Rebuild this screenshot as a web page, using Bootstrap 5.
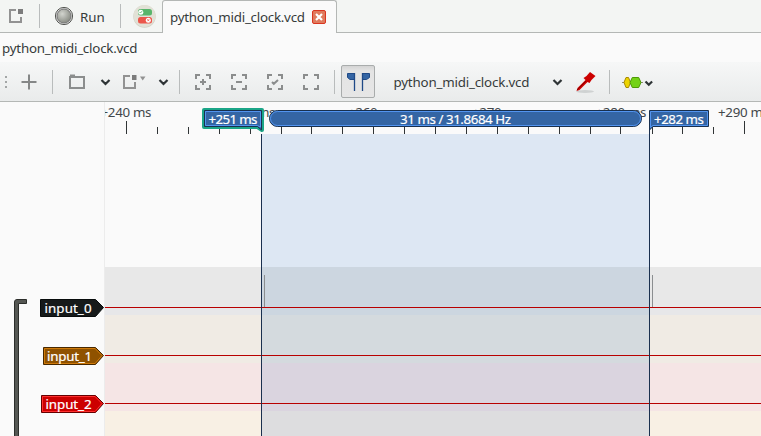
<!DOCTYPE html>
<html lang="en">
<head>
<meta charset="utf-8">
<meta name="viewport" content="width=device-width, initial-scale=1">
<title>python_midi_clock.vcd</title>
<link href="https://cdn.jsdelivr.net/npm/bootstrap@5.3.0/dist/css/bootstrap.min.css" rel="stylesheet">
<style>
body{font:13.33px/18px "Noto Sans",sans-serif;color:#363b3b;background:#fafafa;height:436px}
svg{display:block;flex:none}
.tabstrip{height:33px;background:#f3f5f3}
.strip-part{border-bottom:1px solid #b4b7b5}
.strip-tools{width:162px}
.run-label{padding-top:2px}
.file-tab{width:175px;border:1px solid #b4b7b5;border-bottom:0;border-radius:3px 3px 0 0;background:#fafafa;padding:0 0 1px 7px}
.doc-title{height:29px;padding:7px 0 0 2px}
.tools{height:40px;background:linear-gradient(#f6f7f7,#e9ebeb);border-bottom:1px solid #b4b7b5}
.divider{width:1px;height:24px;background:#b9bcbc;flex:none}
.cursor-btn{flex:none;margin-left:6px;width:34px;height:33px;border:1px solid #a9acac;border-radius:2px;background:linear-gradient(#d4d4d4,#e4e4e4 5px,#e6e6e6)}
.panel{width:104px;flex:none;border-right:1px solid #ececec;box-sizing:content-box}
text{font-family:"Noto Sans",sans-serif;font-size:13.33px;fill:#42474a}
text.name{fill:#363b3b}
.tag text{fill:#fff;stroke:#fff;stroke-width:.2px}
</style>
<script src="https://cdn.jsdelivr.net/npm/bootstrap@5.3.0/dist/js/bootstrap.bundle.min.js"></script>
</head>
<body class="d-flex flex-column overflow-hidden m-0">
<nav class="tabstrip d-flex">
  <div class="strip-part strip-tools d-flex align-items-center">
    <svg width="39" height="32" fill="none"><path d="M16 10H10V22H21V17" stroke="#929292" stroke-width="2"/><rect x="18" y="9" width="5" height="5" fill="#7c7c7c"/></svg>
    <span class="divider"></span>
    <svg width="40" height="32"><defs><radialGradient id="ball" cx=".38" cy=".35" r=".7"><stop stop-color="#d2d4ce"/><stop offset="1" stop-color="#858880"/></radialGradient></defs><circle cx="24" cy="16" r="8.6" fill="#dedede" stroke="#555753"/><circle cx="24" cy="16" r="7" fill="url(#ball)" stroke="#777"/></svg>
    <span class="run-label">Run</span>
    <span class="divider ms-auto"></span>
    <svg width="41" height="32"><circle cx="23.500" cy="16.500" r="11.200" fill="#d1d0c4"/><circle cx="23.500" cy="16" r="11" fill="#e2e1d6"/><rect x="17" y="9" width="14" height="6.400" rx="2.500" fill="#59b56b"/><circle cx="19.800" cy="12.200" r="2.500" fill="#fff"/><path d="M18.500 12l1 1 1.700-2" fill="none" stroke="#59b56b" stroke-width=".8"/><rect x="17" y="17" width="14" height="6.400" rx="2.500" fill="#ec564b"/><circle cx="27.300" cy="20.200" r="2.500" fill="#fff"/><path d="M26.300 19.200l2 2m0-2l-2 2" stroke="#ec564b" stroke-width=".8"/></svg>
  </div>
  <div class="file-tab d-flex align-items-center">
    <svg width="142" height="30"><text class="name" x="0" y="20" textLength="135">python_midi_clock.vcd</text></svg>
    <svg width="14" height="14"><rect x=".5" y=".5" width="13" height="13" rx="1.500" fill="#e07b5e" stroke="#da3520"/><path d="M4 4l6 6m0-6l-6 6" stroke="#fff" stroke-width="2.200"/></svg>
  </div>
  <div class="strip-part flex-grow-1"></div>
</nav>
<div class="doc-title"><svg width="150" height="20"><text class="name" x="0" y="13" textLength="135.500">python_midi_clock.vcd</text></svg></div>
<div class="tools d-flex align-items-center">
  <svg width="52" height="39"><g fill="#a3a6a6"><rect x="5" y="14" width="2" height="2"/><rect x="5" y="19" width="2" height="2"/><rect x="5" y="24" width="2" height="2"/></g><path d="M21.500 20H36.500M29 12.500V27.500" stroke="#858787" stroke-width="2"/></svg>
  <span class="divider"></span>
  <svg width="126" height="39" fill="none">
    <path d="M17 15H31V26H17zM17 13.500H22" stroke="#8b8d8d" stroke-width="2"/>
    <path d="M48.500 18l4 4 4-4M106.500 18l4 4 4-4" stroke="#2e3436" stroke-width="2.200"/>
    <path d="M77 14H71V26H82V20" stroke="#929292" stroke-width="2"/><rect x="79" y="13" width="4.500" height="5" fill="#7c7c7c"/><path d="M87 14.500H92.500L89.700 18.500z" fill="#929292"/>
  </svg>
  <span class="divider"></span>
  <svg width="154" height="39" fill="none">
    <g transform="translate(-1 -.5)" stroke="#8b8d8d" stroke-width="2">
    <path d="M17 17.500V13.500H21M27 13.500H31V17.500M31 23.500V27.500H27M21 27.500H17V23.500M24 17.500V23.500M21 20.500H27"/>
    <path d="M53 17.500V13.500H57M63 13.500H67V17.500M67 23.500V27.500H63M57 27.500H53V23.500M57 20.500H63"/>
    <path d="M89 17.500V13.500H93M99 13.500H103V17.500M103 23.500V27.500H99M93 27.500H89V23.500M93 20.500l1.800 1.800L99 18.500"/>
    <path d="M125 17.500V13.500H129M135 13.500H139V17.500M139 23.500V27.500H135M129 27.500H125V23.500"/></g>
  </svg>
  <span class="divider"></span>
  <span class="cursor-btn"><svg width="32" height="31"><path d="M5.500 7.500H12.500V13.500H8L5.500 11.500zM27.500 7.500H20.500V13.500H24.500L27.500 11.500z" fill="#3465a4" stroke="#204a87"/><path d="M12.500 7V25M20.500 7V25" stroke="#204a87" stroke-width="1.300"/></svg></span>
  <svg width="234" height="39"><text class="name" x="18.500" y="25" textLength="136">python_midi_clock.vcd</text><path d="M178.500 18l4 4 4-4" fill="none" stroke="#2e3436" stroke-width="2.200"/><ellipse cx="210" cy="29.500" rx="9" ry="1.500" fill="#cfd2d2"/><path d="M201 29l1-3 8-8-2-2 3-2 3.500-4L220 14l-4 4-2 3-2-1-8 8z" fill="#c00" transform="translate(.5 0)"/><path d="M202 28l9-9" stroke="#800"/></svg>
  <span class="divider"></span>
  <svg width="60" height="39"><path d="M12 20.500H33" stroke="#8b8b75"/><path d="M14 20.500L16 15.500H18.500L20.500 20.500 18.500 25.500H16z" fill="#edd400" stroke="#a88900"/><path d="M20 20.500L22.300 15.500H28.700L31 20.500 28.700 25.500H22.300z" fill="#73d216" stroke="#4e9a06"/><path d="M35.500 19.500l3.300 3.300 3.300-3.300" fill="none" stroke="#2e3436" stroke-width="2.200"/></svg>
</div>
<main class="d-flex flex-grow-1">
  <aside class="panel">
    <svg class="tag" width="104" height="334">
      <path d="M14.500 336V200Q14.500 197.500 17 197.500H26.500V201.500H18.500V336" fill="#555753" stroke="#2c2e2b"/>
      <g><path d="M40.500 197.500H95.500L103.500 205.500 95.500 214.500H40.500z" fill="#161a1a" stroke="#080c0c"/><text x="44.500" y="211" textLength="47">input_0</text></g>
      <g><path d="M43.500 245.500H95.500L103.500 253.500 95.500 262.500H43.500z" fill="#8f5200" stroke="#472800"/><path d="M44.500 246.500H95L102 253.500 95 261.500H44.500z" fill="none" stroke="#cf7a0a"/><text x="47" y="259" textLength="45">input_1</text></g>
      <g><path d="M41.500 293.500H95.500L103.500 301.500 95.500 310.500H41.500z" fill="#c00" stroke="#650000"/><path d="M42.500 294.500H95L102 301.500 95 309.500H42.500z" fill="none" stroke="#ff3030"/><text x="45.500" y="307" textLength="46">input_2</text></g>
    </svg>
  </aside>
  <!-- Trace view, drawn in window coordinates -->
  <svg width="656" height="334" viewBox="105 102 656 334">
    <rect x="105" y="267" width="656" height="48" fill="#e8e8e8"/><rect x="105" y="315" width="656" height="48" fill="#f0ebe4"/><rect x="105" y="363" width="656" height="48" fill="#f5e5e5"/><rect x="105" y="411" width="656" height="25" fill="#f8f0e4"/>
    <rect x="105" y="308" width="656" height="7" fill="#e7e7e9"/>
    <rect x="262" y="134" width="388" height="302" fill="#dde7f3"/>
    <rect x="262" y="267" width="388" height="48" fill="#ccd6e0"/><rect x="262" y="315" width="388" height="48" fill="#d4dade"/><rect x="262" y="363" width="388" height="48" fill="#dad4df"/><rect x="262" y="411" width="388" height="25" fill="#dddddf"/>
    <path d="M264.500 275V307M652.500 275V307" stroke="#8b8e90"/>
    <path d="M105 307.500H761M105 355.500H761M105 403.500H761" stroke="#b80000" shape-rendering="crispEdges"/>
    <g text-anchor="middle"><text x="126" y="117" textLength="51">+240 ms</text><text x="250" y="117" textLength="51">+250 ms</text><text x="373.500" y="117" textLength="51">+260 ms</text><text x="497.500" y="117" textLength="51">+270 ms</text><text x="621" y="117" textLength="51">+280 ms</text><text x="743.500" y="117" textLength="51">+290 ms</text></g>
    <path d="M126.500 121V134M250.500 121V134M373.500 121V134M497.500 121V134M620.500 121V134M744.500 121V134M157.500 127V134M188.500 127V134M219.500 127V134M281.500 127V134M311.500 127V134M342.500 127V134M404.500 127V134M435.500 127V134M466.500 127V134M528.500 127V134M559.500 127V134M590.500 127V134M652.500 127V134M682.500 127V134M713.500 127V134" stroke="#303436"/>
    <path d="M261.500 134V436M649.500 128V436" stroke="#1a304f"/>
    <g class="tag">
      <rect x="269.500" y="110.500" width="372" height="16" rx="8" fill="#3465a4" stroke="#18304f"/><rect x="270.500" y="111.500" width="370" height="14" rx="7" fill="none" stroke="#5294f0"/>
      <text x="400" y="124" textLength="111">31 ms / 31.8684 Hz</text>
      <path d="M204 110H262V130L257.500 127H204z" fill="#3465a4" stroke="#1ba587" stroke-width="4" stroke-linejoin="round"/>
      <path d="M204.500 110.500H261.500V130L257.500 126.500H204.500z" fill="#3465a4" stroke="#18304f"/><path d="M205.500 111.500H260.500V127L257.500 125.500H205.500z" fill="none" stroke="#5294f0"/>
      <text x="208.500" y="124" textLength="49">+251 ms</text>
      <path d="M649.500 110.500H708.500V126.500H653L649.500 130z" fill="#3465a4" stroke="#18304f"/><path d="M650.500 111.500H707.500V125.500H652.500L650.500 127.500z" fill="none" stroke="#5294f0"/>
      <text x="654" y="124" textLength="50">+282 ms</text>
    </g>
  </svg>
</main>
</body>
</html>
